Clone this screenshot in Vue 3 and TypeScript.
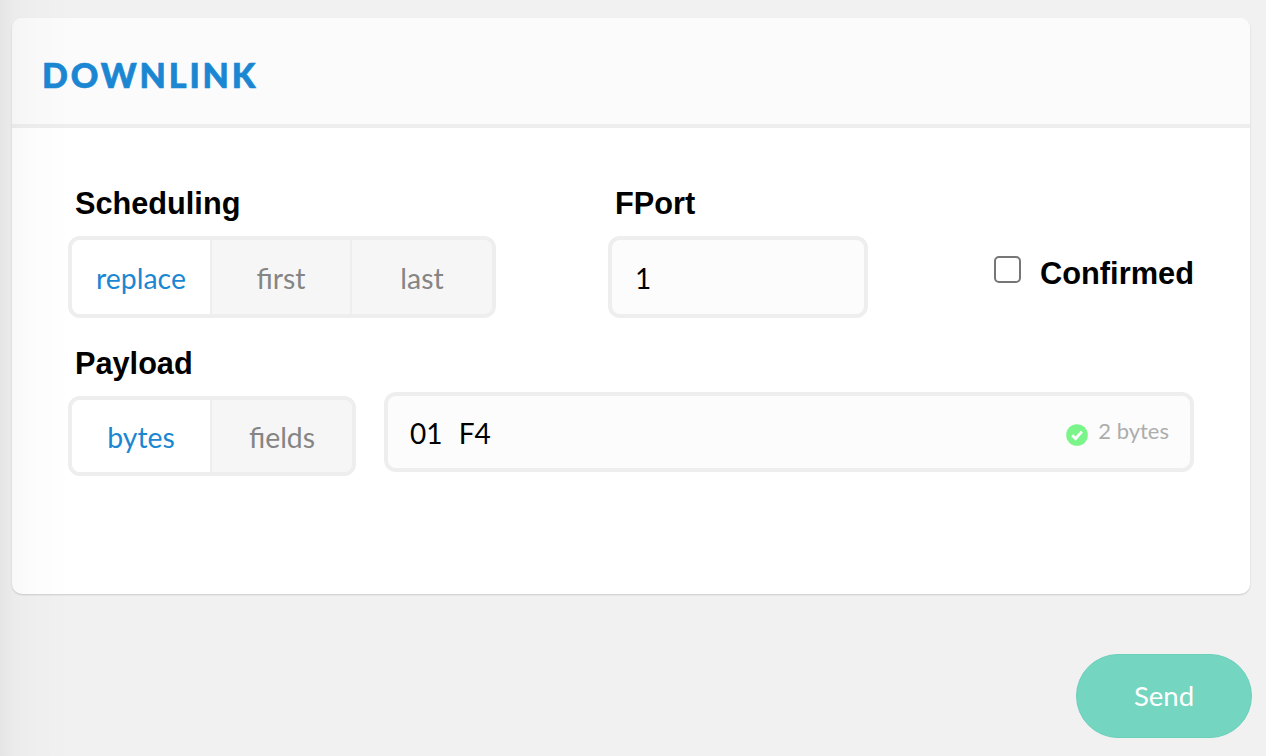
<template>
  <div class="page">
    <div class="edge-shade"></div>
    <section class="card">
      <header class="card-header">
        <h2 class="card-title">DOWNLINK</h2>
      </header>
      <div class="card-body">
        <div class="row">
          <div class="field">
            <label class="field-label">Scheduling</label>
            <div class="toggle">
              <button
                v-for="item in schedules"
                :key="item"
                class="toggle-item"
                :class="{ active: item === schedule }"
              >{{ item }}</button>
            </div>
          </div>
          <div class="field fport">
            <label class="field-label">FPort</label>
            <div class="text-input">1</div>
          </div>
          <div class="confirmed">
            <span class="checkbox"></span>
            <span class="confirmed-text">Confirmed</span>
          </div>
        </div>
        <label class="field-label payload-label">Payload</label>
        <div class="row payload-row">
          <div class="toggle payload-toggle">
            <button
              v-for="item in payloadTypes"
              :key="item"
              class="toggle-item"
              :class="{ active: item === payloadType }"
            >{{ item }}</button>
          </div>
          <div class="payload-input">
            <span class="payload-value">01 F4</span>
            <span class="payload-status">
              <svg class="status-icon" viewBox="0 0 22 22">
                <circle cx="11" cy="11" r="10.8" fill="#7bf58a" />
                <path d="M6.2 11.2l3.4 3.4 6.2-7" fill="none" stroke="#fff" stroke-width="2.8" />
              </svg>
              2 bytes
            </span>
          </div>
        </div>
      </div>
    </section>
    <div class="actions">
      <button class="send-button">Send</button>
    </div>
  </div>
</template>

<script setup lang="ts">
const schedules: string[] = ['replace', 'first', 'last']
const schedule = 'replace'
const payloadTypes: string[] = ['bytes', 'fields']
const payloadType = 'bytes'
</script>

<style scoped>
.page {
  position: relative;
  height: 756px;
  box-sizing: border-box;
  padding: 18px 14px 0 12px;
  overflow: hidden;
  background: #f1f1f1;
}

.edge-shade {
  position: absolute;
  top: 0;
  left: 0;
  bottom: 0;
  width: 72px;
  background: linear-gradient(
    to right,
    rgba(0, 0, 0, 0.05),
    rgba(0, 0, 0, 0.025) 14px,
    rgba(0, 0, 0, 0.012) 32px,
    rgba(0, 0, 0, 0)
  );
  pointer-events: none;
  z-index: 2;
}

.card {
  margin-right: 2px;
  background: #fff;
  border-radius: 10px;
  box-shadow: 0 1px 2px rgba(0, 0, 0, 0.16);
}

.card-header {
  height: 106px;
  display: flex;
  align-items: center;
  padding-left: 30px;
  background: #fbfbfb;
  border-bottom: 4px solid #eeeeee;
  border-radius: 10px 10px 0 0;
}

.card-title {
  margin: 6px 0 0;
  font-family: Lato, sans-serif;
  font-size: 34px;
  font-weight: 900;
  letter-spacing: 2.9px;
  -webkit-text-stroke: 0.7px #1b87d2;
  color: #1b87d2;
}

.card-body {
  padding: 58px 56px 118px;
}

.row {
  display: flex;
}

.field {
  display: flex;
  flex-direction: column;
}

.fport {
  margin-left: 112px;
}

.field-label {
  display: block;
  height: 34px;
  margin: 0 0 16px 7px;
  font-family: "Liberation Sans", Arial, sans-serif;
  font-size: 30.7px;
  font-weight: 700;
  line-height: 36px;
  color: #000;
}

.payload-label {
  margin-top: 28px;
}

.toggle {
  display: flex;
  width: 428px;
  height: 82px;
  box-sizing: border-box;
  border: 4px solid #eeeeee;
  border-radius: 12px;
  background: #f6f6f6;
  overflow: hidden;
}

.toggle-item {
  flex: 0 0 140px;
  padding: 2px 0 0;
  border: 0;
  border-right: 2px solid #eeeeee;
  background: #f6f6f6;
  font-family: Lato, sans-serif;
  font-size: 28.4px;
  color: #858585;
}

.toggle-item:last-child {
  flex: 1;
  border-right: 0;
}

.toggle-item.active {
  background: #fff;
  color: #1b87d2;
}

.text-input {
  width: 260px;
  height: 82px;
  box-sizing: border-box;
  padding-left: 23px;
  border: 4px solid #eeeeee;
  border-radius: 12px;
  background: #fcfcfc;
  font-family: Lato, sans-serif;
  font-size: 28px;
  line-height: 76px;
  color: #000;
}

.confirmed {
  display: flex;
  align-items: center;
  margin-left: auto;
  align-self: flex-end;
  height: 82px;
  padding-bottom: 6px;
  box-sizing: border-box;
}

.checkbox {
  width: 27px;
  height: 27px;
  box-sizing: border-box;
  margin-top: -10px;
  border: 2px solid #767676;
  border-radius: 5px;
  background: #fff;
}

.confirmed-text {
  margin-left: 19px;
  font-family: "Liberation Sans", Arial, sans-serif;
  font-size: 30.8px;
  font-weight: 700;
  color: #000;
}

.payload-row {
  align-items: flex-start;
}

.payload-toggle {
  width: 288px;
  height: 80px;
}

.payload-input {
  flex: 1;
  display: flex;
  align-items: center;
  justify-content: space-between;
  height: 80px;
  box-sizing: border-box;
  margin: -4px 0 0 28px;
  padding: 0 21px 0 22px;
  border: 4px solid #eeeeee;
  border-radius: 12px;
  background: #fcfcfc;
}

.payload-value {
  padding-top: 1px;
  font-family: Lato, sans-serif;
  font-size: 28px;
  word-spacing: 9px;
  color: #000;
}

.payload-status {
  display: flex;
  align-items: center;
  margin-top: -3px;
  font-family: Lato, sans-serif;
  font-size: 22px;
  color: #adadad;
}

.status-icon {
  width: 22px;
  height: 22px;
  margin: 8px 10px 0 0;
}

.actions {
  display: flex;
  justify-content: flex-end;
  margin-top: 60px;
}

.send-button {
  width: 176px;
  height: 84px;
  padding: 0 0 2px;
  border: 1px solid #6bd0ba;
  border-radius: 42px;
  background: #74d5c0;
  font-family: Lato, sans-serif;
  font-size: 27.5px;
  color: #fff;
}
</style>
